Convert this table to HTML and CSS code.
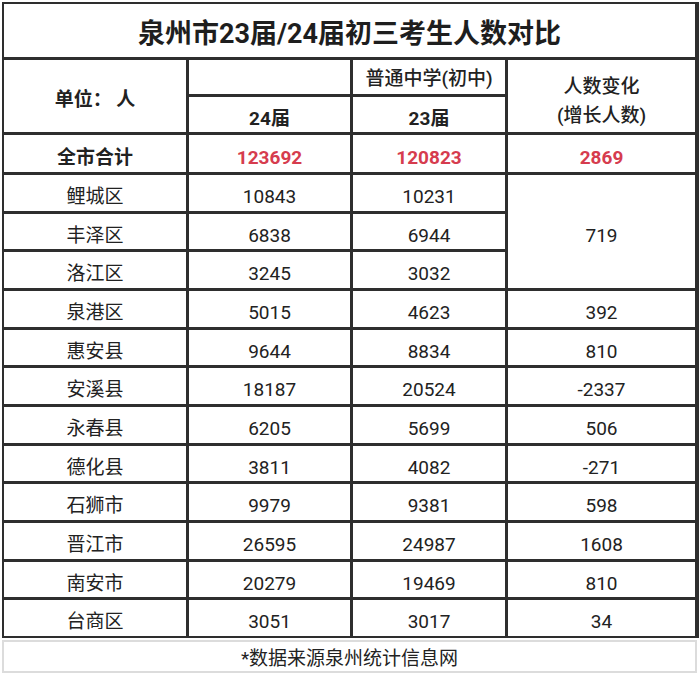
FILE: index.html
```html
<!DOCTYPE html>
<html lang="zh-CN">
<head>
<meta charset="utf-8">
<title>泉州市23届/24届初三考生人数对比</title>
<link rel="stylesheet" href="styles.css">
</head>
<body>
<div class="page">
  <div class="sheet">
    <div class="cell title">泉州市23届/24届初三考生人数对比</div>

    <div class="cell head unit">单位：&nbsp;人</div>
    <div class="cell head blank"></div>
    <div class="cell head school">普通中学(初中)</div>
    <div class="cell head change">人数变化<br>(增长人数)</div>
    <div class="cell head year">24届</div>
    <div class="cell head year">23届</div>

    <div class="cell head">全市合计</div>
    <div class="cell total">123692</div>
    <div class="cell total">120823</div>
    <div class="cell total">2869</div>

    <div class="cell">鲤城区</div><div class="cell">10843</div><div class="cell">10231</div>
    <div class="cell merged">719</div>
    <div class="cell">丰泽区</div><div class="cell">6838</div><div class="cell">6944</div>
    <div class="cell">洛江区</div><div class="cell">3245</div><div class="cell">3032</div>

    <div class="cell">泉港区</div><div class="cell">5015</div><div class="cell">4623</div><div class="cell">392</div>
    <div class="cell">惠安县</div><div class="cell">9644</div><div class="cell">8834</div><div class="cell">810</div>
    <div class="cell">安溪县</div><div class="cell">18187</div><div class="cell">20524</div><div class="cell">-2337</div>
    <div class="cell">永春县</div><div class="cell">6205</div><div class="cell">5699</div><div class="cell">506</div>
    <div class="cell">德化县</div><div class="cell">3811</div><div class="cell">4082</div><div class="cell">-271</div>
    <div class="cell">石狮市</div><div class="cell">9979</div><div class="cell">9381</div><div class="cell">598</div>
    <div class="cell">晋江市</div><div class="cell">26595</div><div class="cell">24987</div><div class="cell">1608</div>
    <div class="cell">南安市</div><div class="cell">20279</div><div class="cell">19469</div><div class="cell">810</div>
    <div class="cell">台商区</div><div class="cell">3051</div><div class="cell">3017</div><div class="cell">34</div>
  </div>
  <div class="note">*数据来源泉州统计信息网</div>
</div>
</body>
</html>
```

FILE: styles.css
```css
html, body {
  margin: 0;
  padding: 0;
  background: #ffffff;
}

body {
  font-family: Roboto, "Noto Sans CJK SC", "Noto Sans", sans-serif;
  color: #222222;
}

.page {
  width: 700px;
  height: 674px;
  padding: 2px 1px 0 2px;
  box-sizing: border-box;
}

.sheet {
  display: grid;
  grid-template-columns: 182px 161px 152px 187px;
  grid-template-rows: 53px 34px 35px 37px repeat(12, 35.67px);
  gap: 3px;
  padding: 2px;
  background: #2e2e2e;
  width: 697px;
  box-sizing: border-box;
}

.cell {
  background: #ffffff;
  display: flex;
  align-items: center;
  justify-content: center;
  text-align: center;
  font-size: 19px;
  line-height: 1.25;
  padding-top: 8px;
  box-sizing: border-box;
}

.title {
  grid-column: 1 / 5;
  font-size: 27px;
  font-weight: 700;
  color: #1e1e1e;
  padding-top: 9px;
}

.head {
  font-weight: 700;
}

.unit {
  grid-row: 2 / 4;
}

.change {
  grid-row: 2 / 4;
  grid-column: 4;
  font-weight: 500;
  line-height: 1.55;
  padding-top: 10px;
}

.school {
  font-weight: 500;
  padding-top: 4px;
}

.year {
  padding-top: 9px;
}

.total {
  color: #d63c4e;
  font-weight: 700;
}

.merged {
  grid-column: 4;
  grid-row: 5 / 8;
}

.note {
  margin-top: 2px;
  width: 695px;
  height: 33px;
  box-sizing: border-box;
  border: 2px solid #dcdcdc;
  display: flex;
  align-items: center;
  justify-content: center;
  font-size: 19px;
  color: #222222;
  padding-top: 1px;
}
```
